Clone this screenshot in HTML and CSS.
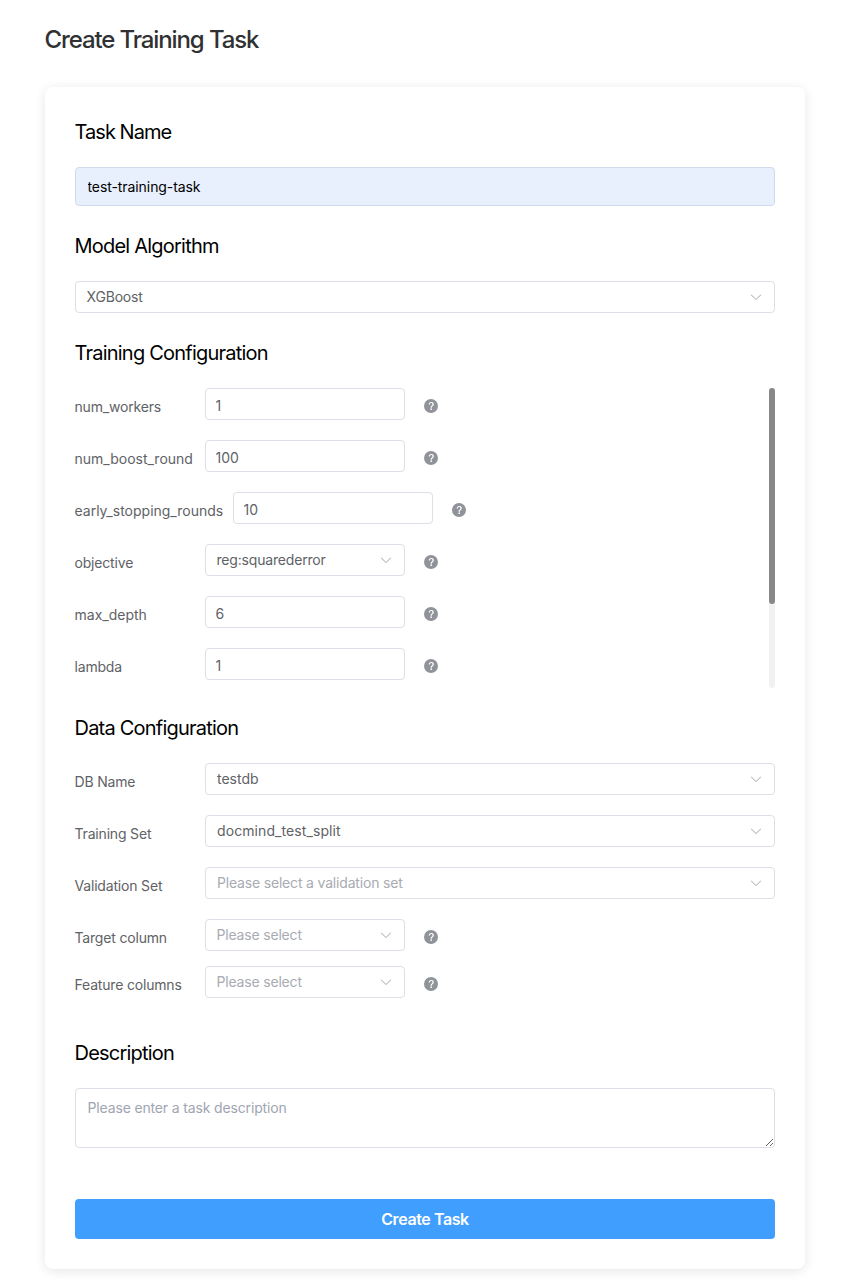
FILE: index.html
```
<!DOCTYPE html>
<html lang="en">
<head>
<meta charset="utf-8">
<title>Create Training Task</title>
<link rel="stylesheet" href="styles.css">
</head>
<body>
<svg class="sprite" aria-hidden="true">
  <symbol id="arrow" viewBox="0 0 1024 1024"><path d="M831.872 340.864 512 652.672 192.128 340.864a30.592 30.592 0 0 0-42.752 0 29.12 29.12 0 0 0 0 41.6L489.664 714.24a32 32 0 0 0 44.672 0l340.288-331.712a29.12 29.12 0 0 0 0-41.728 30.592 30.592 0 0 0-42.752 0z"/></symbol>
  <symbol id="help" viewBox="0 0 1024 1024"><path d="M512 64a448 448 0 1 1 0 896 448 448 0 0 1 0-896m23.744 191.488c-52.096 0-92.928 14.784-123.2 44.352-30.976 29.568-45.76 70.4-45.76 122.496h80.256c0-29.568 5.632-52.8 17.6-68.992 13.376-19.712 35.2-28.864 66.176-28.864 23.936 0 42.944 6.336 56.32 19.712 12.672 13.376 19.712 31.68 19.712 54.912 0 17.6-6.336 34.496-19.008 49.984l-8.448 9.856c-45.76 40.832-73.216 70.4-82.368 89.408-9.856 19.008-14.08 42.24-14.08 68.992v9.856h80.96v-9.856c0-16.896 3.52-31.68 10.56-45.76 6.336-12.672 15.488-24.64 28.16-35.2 33.792-29.568 54.208-48.576 60.544-55.616 16.896-22.528 26.048-51.392 26.048-86.592 0-42.944-14.08-76.736-42.24-101.376-28.16-25.344-65.472-37.312-111.232-37.312zm-12.672 406.208a54.272 54.272 0 0 0-38.72 14.784 49.408 49.408 0 0 0-15.488 38.016c0 15.488 4.928 28.16 15.488 38.016A54.848 54.848 0 0 0 523.072 768c15.488 0 28.16-4.928 38.72-14.784a51.52 51.52 0 0 0 16.192-38.72 51.968 51.968 0 0 0-15.488-38.016 55.936 55.936 0 0 0-39.424-14.784z"/></symbol>
</svg>
<main class="page">
  <h1 class="title">Create Training Task</h1>
  <form class="card">
    <h2 class="heading">Task Name</h2>
    <input class="name-input" type="text" value="test-training-task">

    <h2 class="heading">Model Algorithm</h2>
    <div class="select select-first"><span>XGBoost</span><svg class="arrow"><use href="#arrow"/></svg></div>

    <h2 class="heading">Training Configuration</h2>
    <div class="scroll-area">
      <div class="rows">
        <div class="row"><label class="label">num_workers</label><input class="input" value="1"><svg class="help"><use href="#help"/></svg></div>
        <div class="row"><label class="label loose">num_boost_round</label><input class="input" value="100"><svg class="help"><use href="#help"/></svg></div>
        <div class="row"><label class="label label-long loose">early_stopping_rounds</label><input class="input" value="10"><svg class="help"><use href="#help"/></svg></div>
        <div class="row"><label class="label">objective</label><div class="select short"><span>reg:squarederror</span><svg class="arrow"><use href="#arrow"/></svg></div><svg class="help"><use href="#help"/></svg></div>
        <div class="row"><label class="label loose">max_depth</label><input class="input" value="6"><svg class="help"><use href="#help"/></svg></div>
        <div class="row"><label class="label">lambda</label><input class="input" value="1"><svg class="help"><use href="#help"/></svg></div>
      </div>
      <div class="track"><div class="thumb"></div></div>
    </div>

    <h2 class="heading">Data Configuration</h2>
    <div class="rows data-rows">
      <div class="row"><label class="label">DB Name</label><div class="select loose"><span>testdb</span><svg class="arrow"><use href="#arrow"/></svg></div></div>
      <div class="row"><label class="label">Training Set</label><div class="select wide-text"><span>docmind_test_split</span><svg class="arrow"><use href="#arrow"/></svg></div></div>
      <div class="row"><label class="label">Validation Set</label><div class="select empty"><span>Please select a validation set</span><svg class="arrow"><use href="#arrow"/></svg></div></div>
      <div class="row"><label class="label">Target column</label><div class="select short empty"><span>Please select</span><svg class="arrow"><use href="#arrow"/></svg></div><svg class="help"><use href="#help"/></svg></div>
      <div class="row row-tight"><label class="label">Feature columns</label><div class="select short empty"><span>Please select</span><svg class="arrow"><use href="#arrow"/></svg></div><svg class="help"><use href="#help"/></svg></div>
    </div>

    <h2 class="heading heading-last">Description</h2>
    <textarea class="textarea" placeholder="Please enter a task description"></textarea>
    <button class="submit" type="button">Create Task</button>
  </form>
</main>
</body>
</html>
```
FILE: styles.css
```
* { box-sizing: border-box; }
body {
  margin: 0;
  background: #fff;
  font-family: Inter, "Liberation Sans", sans-serif;
  font-size: 14px;
  letter-spacing: -0.18px;
  color: #606266;
}
.sprite { display: none; }
.page { padding: 24px 45px 17px; }
.title {
  margin: 0 0 31px;
  font-size: 24px;
  line-height: 32px;
  font-weight: 500;
  letter-spacing: -1.11px;
  text-indent: -0.5px;
  color: #303133;
}
.card {
  display: flex;
  flex-direction: column;
  height: 1182px;
  padding: 30px;
  background: #fff;
  border-radius: 8px;
  box-shadow: 0 2px 12px rgba(0, 0, 0, 0.1);
}
.heading {
  margin: 25px 0 20px;
  font-size: 20px;
  line-height: 30px;
  font-weight: 400;
  letter-spacing: -0.78px;
  text-indent: -0.5px;
  color: #000;
}
.heading:first-child { margin-top: 0; letter-spacing: -0.95px; }
.heading-last { margin-top: 40px; }
input, textarea, button { font: inherit; letter-spacing: inherit; outline: none; }
.name-input {
  height: 39px;
  padding: 1px 11.5px;
  border: 1px solid #d0dbeb;
  border-radius: 4px;
  background: #e8effd;
  letter-spacing: -0.08px;
  color: #000;
}
.input {
  width: 200px;
  height: 32px;
  padding: 3px 9.5px 1px;
  border: 1px solid #dcdfe6;
  border-radius: 4px;
  background: #fff;
  letter-spacing: 0;
  color: #606266;
}
.select {
  display: flex;
  flex: 1;
  align-items: center;
  justify-content: space-between;
  height: 32px;
  padding: 0 11px;
  border: 1px solid #dcdfe6;
  border-radius: 4px;
  background: #fff;
}
.select span { padding-bottom: 2px; }
.select-first { flex: none; padding-left: 10.5px; }
.short { flex: none; width: 200px; padding-left: 10.5px; }
.empty { color: #a8abb2; }
.loose { letter-spacing: 0; }
.wide-text { letter-spacing: 0.09px; }
.arrow { width: 14px; height: 14px; fill: #a8abb2; }
.scroll-area { display: flex; justify-content: space-between; height: 300px; }
.rows { display: flex; flex-direction: column; gap: 20px; }
.row { display: flex; height: 32px; }
.row-tight { margin-top: -5px; }
.label {
  width: 130px;
  padding-top: 3px;
  line-height: 32px;
  text-indent: -0.5px;
  white-space: nowrap;
}
.label-long { width: 158px; }
.help { width: 16px; height: 16px; margin: 10px 0 0 18px; fill: #909399; }
.track { width: 6px; height: 300px; border-radius: 3px; background: #f1f1f1; }
.thumb { width: 6px; height: 216px; border-radius: 3px; background: #888; }
.textarea {
  height: 60px;
  padding: 8px 11.5px;
  border: 1px solid #dcdfe6;
  border-radius: 4px;
  line-height: 21px;
  letter-spacing: -0.15px;
  resize: vertical;
}
.textarea::placeholder { color: #a0a5b1; }
.submit {
  height: 40px;
  margin-top: 51px;
  border: 0;
  border-radius: 4px;
  background: #409eff;
  color: #fff;
  font-size: 16px;
  font-weight: 600;
  letter-spacing: -0.4px;
}
```
